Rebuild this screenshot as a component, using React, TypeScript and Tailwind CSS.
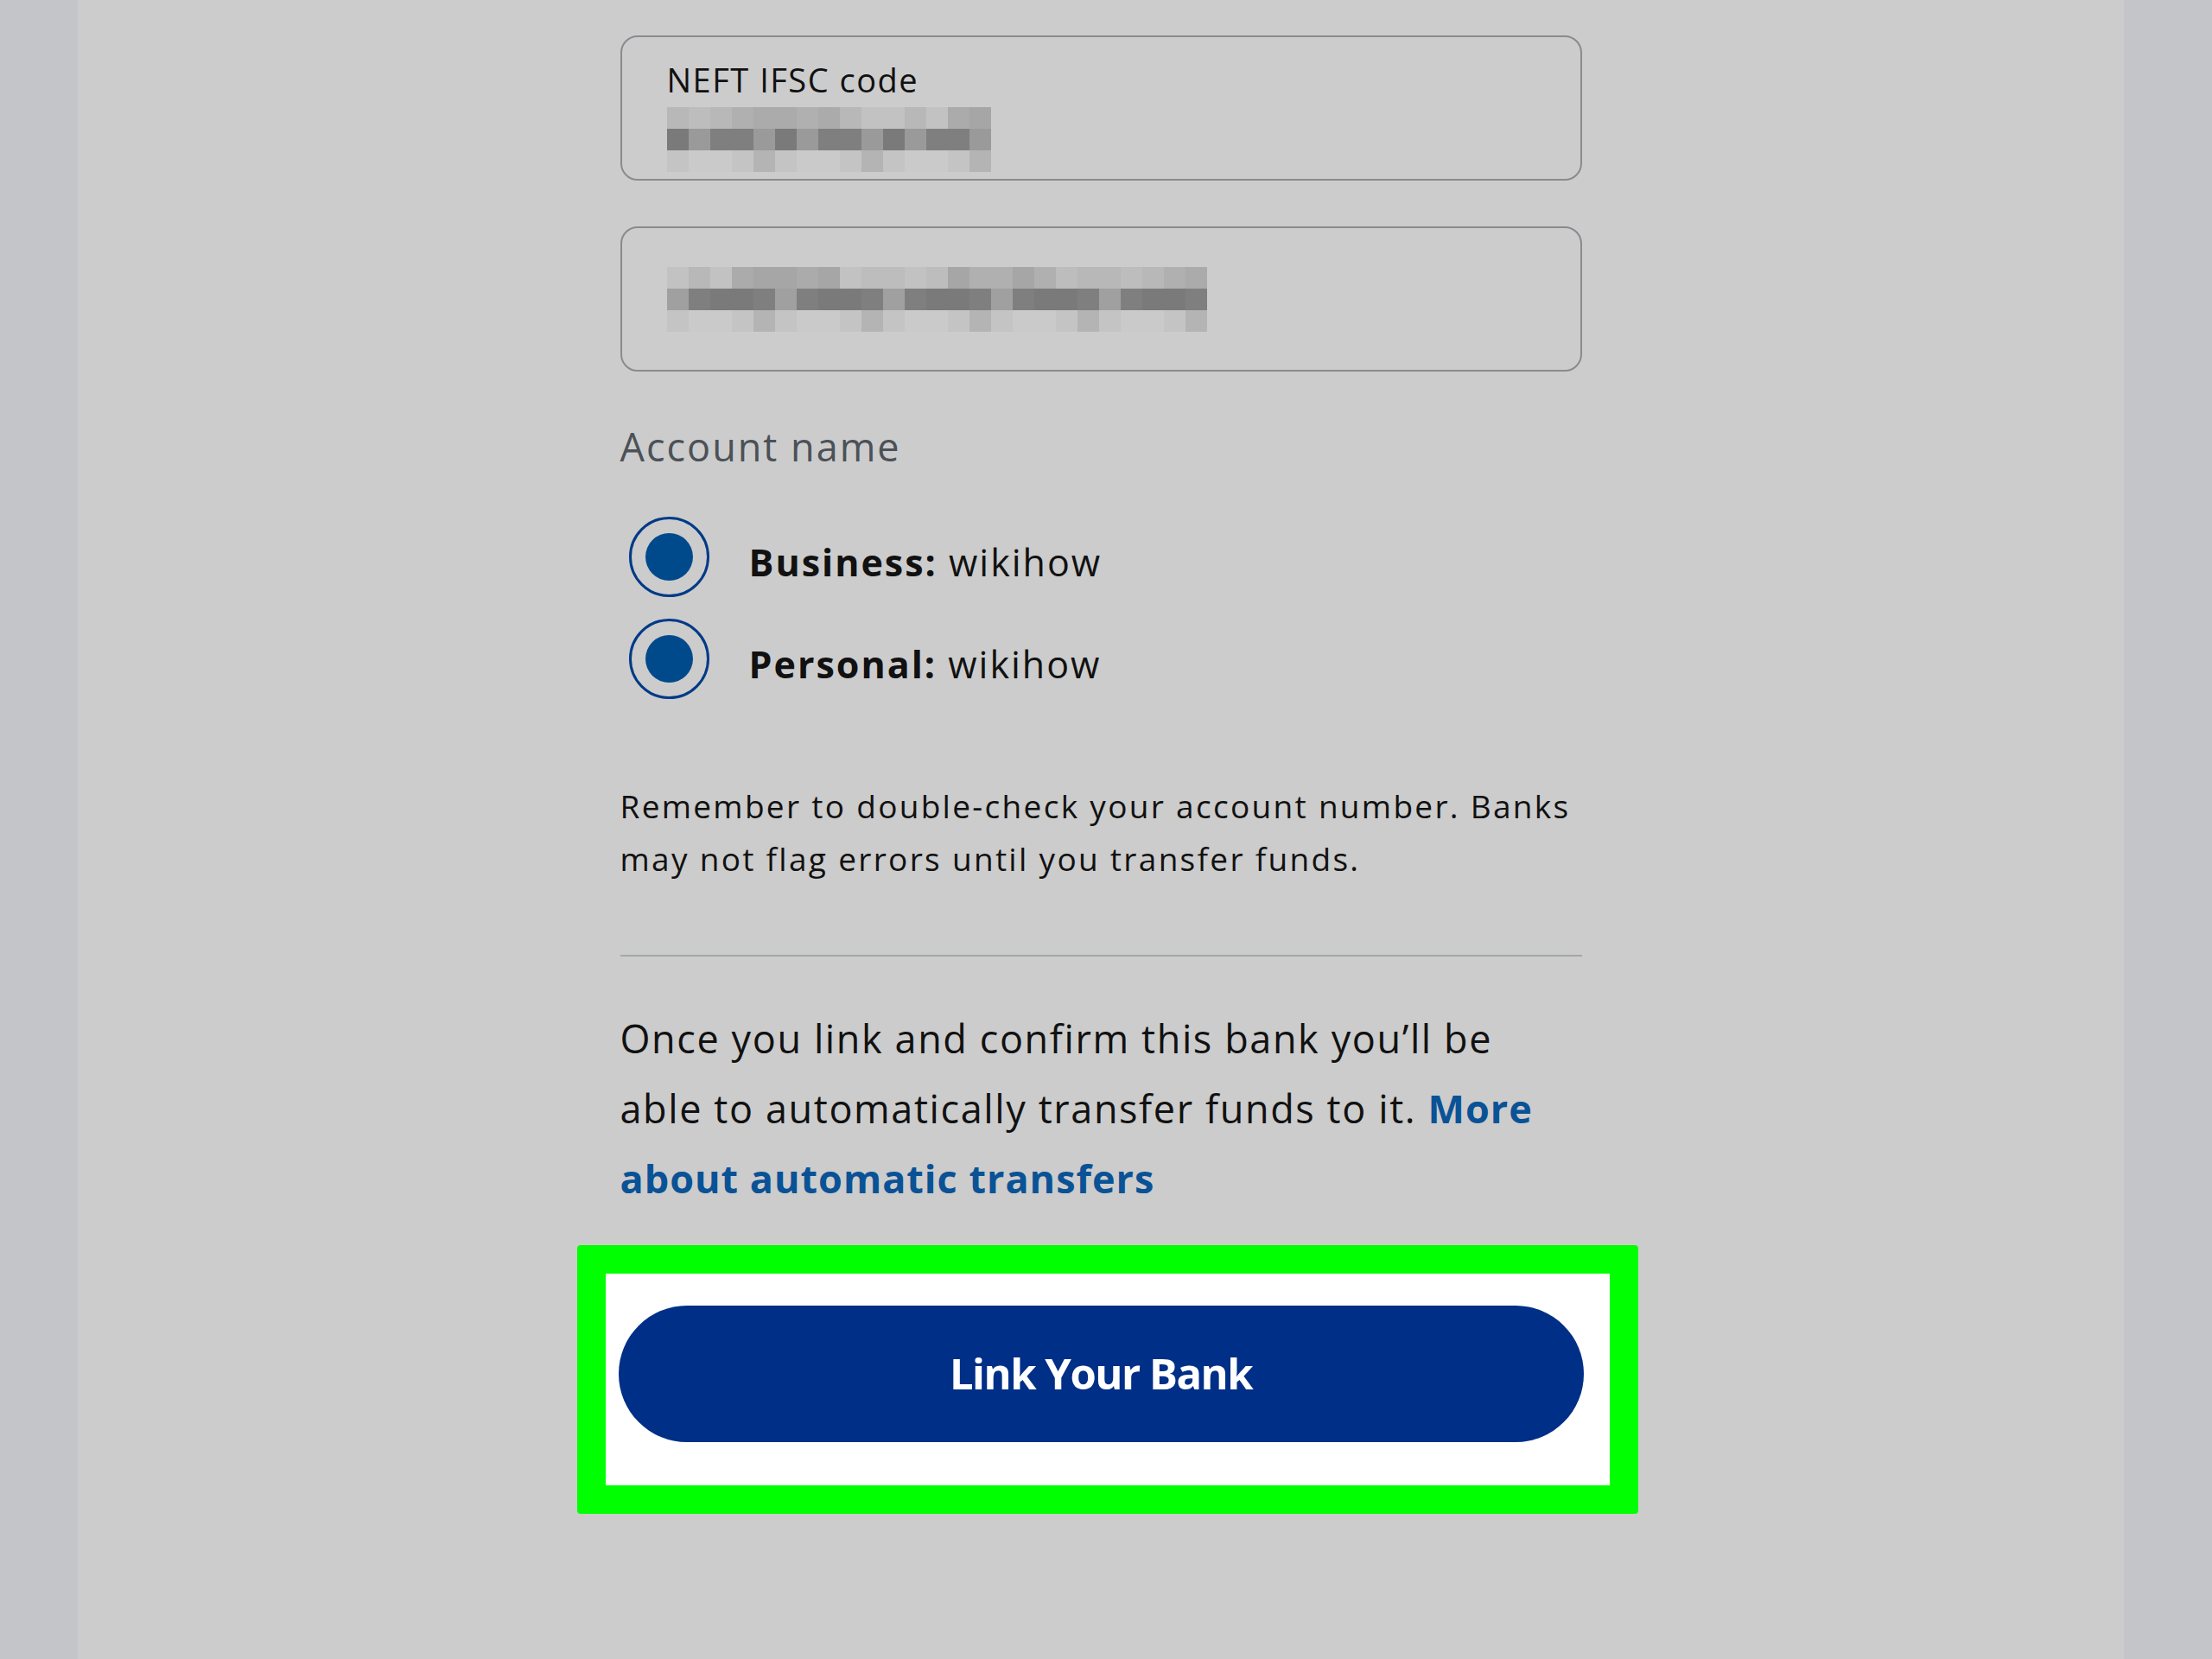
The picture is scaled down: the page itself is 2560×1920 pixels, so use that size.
import React from "react";

const font = { fontFamily: '"Open Sans", "Noto Sans", sans-serif' };

// shades for the pixelated (blurred) account values
const light = ["bg-[#b0b0b0]", "bg-[#bdbdbd]", "bg-[#a6a6a6]", "bg-[#c2c2c2]", "bg-[#ababab]", "bg-[#b8b8b8]"];
const dark = ["bg-[#858585]", "bg-[#7a7a7a]", "bg-[#9a9a9a]", "bg-[#8c8c8c]", "bg-[#a0a0a0]", "bg-[#7f7f7f]", "bg-[#939393]"];
const pale = ["bg-[#b4b4b4]", "bg-[#c4c4c4]", "bg-[#c8c8c8]", "bg-[#b9b9b9]", "bg-[#cacaca]"];

function Pixels({ cols, seed }: { cols: number; seed: number }) {
  const pick = (arr: string[], i: number, r: number) => arr[(i * 7 + r * 3 + seed * 5 + ((i * i) % 5)) % arr.length];
  const rows = [light, dark, pale];
  return (
    <div className="flex flex-col">
      {rows.map((arr, r) => (
        <div key={r} className="flex">
          {Array.from({ length: cols }).map((_, i) => (
            <div key={i} className={`w-[25px] h-[25px] ${pick(arr, i, r)}`} />
          ))}
        </div>
      ))}
    </div>
  );
}

function Radio({ label, value }: { label: string; value: string }) {
  return (
    <div className="flex items-center h-[93px]">
      <div className="ml-[10px] w-[93px] h-[93px] rounded-full border-[3px] border-[#003a87] flex items-center justify-center">
        <div className="w-[55px] h-[55px] rounded-full bg-[#004a8c]" />
      </div>
      <span className="ml-[46px] pt-[12px] text-[43px] leading-[52px] tracking-[2px] text-[#111111]">
        <b className="font-bold">{label}:</b> {value}
      </span>
    </div>
  );
}

export default function App() {
  return (
    <div className="flex w-[2560px] h-[1920px] bg-[#cccccc]" style={font}>
      <div className="w-[90px] bg-[#c4c5c8]" />
      <div className="flex-1">
        <div className="w-[1113px] mx-auto pt-[41px]">
          {/* IFSC field */}
          <div className="h-[168px] rounded-[20px] border-2 border-[#888b8f] pl-[52px] pt-[26px]">
            <div className="text-[38px] leading-[46px] tracking-[1.5px] text-[#111111]">NEFT IFSC code</div>
            <div className="mt-[9px]">
              <Pixels cols={15} seed={1} />
            </div>
          </div>

          {/* account number field */}
          <div className="mt-[53px] h-[168px] rounded-[20px] border-2 border-[#888b8f] pl-[52px] flex items-center">
            <Pixels cols={25} seed={3} />
          </div>

          <div className="mt-[60px] text-[45px] leading-[54px] tracking-[2px] text-[#4b5157]">Account name</div>

          <div className="mt-[54px] flex flex-col gap-[25px]">
            <Radio label="Business" value="wikihow" />
            <Radio label="Personal" value="wikihow" />
          </div>

          <p className="mt-[93px] text-[37px] leading-[61px] tracking-[2.3px] text-[#111111]">
            Remember to double-check your account number. Banks may not flag errors until you transfer funds.
          </p>

          <div className="mt-[81px] h-[2px] bg-[#a3a7ab]" />

          <p className="mt-[54px] text-[45px] leading-[81px] tracking-[1.6px] text-[#111111]">
            Once you link and confirm this bank you’ll be able to automatically transfer funds to it.{" "}
            <a className="font-bold tracking-[1px] text-[#0a5296]">More about automatic transfers</a>
          </p>

          {/* highlighted button */}
          <div className="mt-[37px] -ml-[50px] w-[1228px] border-[33px] border-[#00ff00] rounded-[4px] bg-white pl-[15px] pr-[30px] pt-[37px] pb-[50px]">
            <button className="w-full h-[158px] rounded-full bg-[#002f87] text-white text-[49px] font-bold tracking-[-1.5px]">
              Link Your Bank
            </button>
          </div>
        </div>
      </div>
      <div className="w-[102px] bg-[#c4c5c8]" />
    </div>
  );
}
